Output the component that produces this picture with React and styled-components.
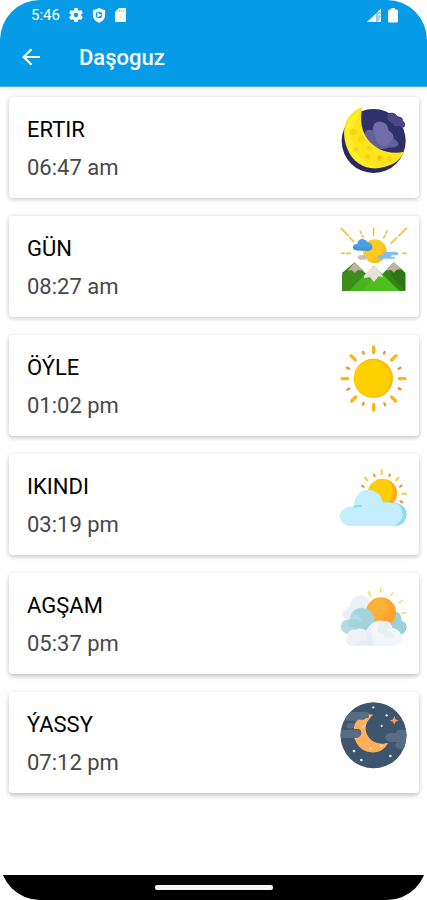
import React from 'react';
import styled, { createGlobalStyle } from 'styled-components';

const GlobalStyle = createGlobalStyle`
  *, *::before, *::after { box-sizing: border-box; }
  body { margin: 0; background: #fff; font-family: Roboto, "Noto Sans", sans-serif; }
`;

const Shell = styled.div`
  display: flex;
  flex-direction: column;
  min-height: 100vh;
  border-radius: 40px;
  overflow: hidden;
  background: #fefefe;
`;

const Header = styled.header`
  background: #059be7;
  color: #fff;
  border-bottom: 1px solid #4aaee6;
`;

const StatusBar = styled.div`
  display: flex;
  align-items: center;
  justify-content: space-between;
  height: 30px;
  padding: 0 29px 0 31px;
`;

const StatusGroup = styled.div`
  display: flex;
  align-items: center;
  gap: ${({ $gap }) => $gap}px;
`;

const Clock = styled.time`
  font-size: 15px;
  line-height: 20px;
`;

const Toolbar = styled.div`
  display: flex;
  align-items: center;
  gap: 34px;
  height: 56px;
  padding: 0 18px;
`;

const BackButton = styled.button`
  display: flex;
  padding: 0;
  border: 0;
  background: none;
  color: inherit;
  cursor: pointer;
`;

const Title = styled.h1`
  margin: 0;
  font-size: 22px;
  line-height: 28px;
  font-weight: 500;
`;

const CardList = styled.main`
  flex: 1;
  display: flex;
  flex-direction: column;
  gap: 18px;
  padding: 10px 8px 24px 9px;
`;

const Card = styled.article`
  display: flex;
  justify-content: space-between;
  align-items: flex-start;
  padding: 10px 12px 8px 18px;
  border-radius: 4px;
  background: #fff;
  box-shadow: 0 ${({ $depth }) => $depth}px 4px rgba(0, 0, 0, 0.15), 0 1px 5px rgba(0, 0, 0, 0.1);
`;

const CardText = styled.div`
  display: flex;
  flex-direction: column;
  gap: 12px;
  padding: 10px 0 9px;
`;

const PrayerName = styled.h2`
  margin: 0;
  font-size: 22px;
  line-height: 26px;
  font-weight: 400;
  color: #000;
`;

const PrayerTime = styled.time`
  font-size: 22px;
  line-height: 26px;
  color: #484848;
`;

const Picture = styled.svg`
  display: block;
  width: 67px;
  height: 67px;
  flex: none;
`;

const NavBar = styled.footer`
  display: flex;
  justify-content: center;
  align-items: center;
  height: 25px;
  background: #000;
`;

const HomePill = styled.div`
  width: 118px;
  height: 5px;
  border-radius: 2px;
  background: #f4f4f4;
`;

const GearIcon = () => (
  <svg width="14" height="14" viewBox="2 2 20 20" fill="#fff" aria-hidden="true">
    <path fillRule="evenodd" d="M19.4 13a7.500 7.500 0 0 0 0-2l2.100-1.600a.5.5 0 0 0 .1-.6l-2-3.500a.5.5 0 0 0-.6-.2l-2.500 1a7.300 7.300 0 0 0-1.700-1L14.500 2.400a.5.5 0 0 0-.5-.4h-4a.5.5 0 0 0-.5.4L9.200 5.100a7.300 7.300 0 0 0-1.700 1L5 5.100a.5.5 0 0 0-.6.2l-2 3.500a.5.5 0 0 0 .1.600L4.600 11a7.500 7.500 0 0 0 0 2l-2.100 1.600a.5.5 0 0 0-.1.600l2 3.500c.1.200.4.300.6.200l2.500-1a7.300 7.300 0 0 0 1.700 1l.3 2.700c0 .2.200.4.500.4h4c.3 0 .5-.2.5-.4l.3-2.700a7.300 7.300 0 0 0 1.700-1l2.500 1c.2.100.5 0 .6-.2l2-3.500a.5.5 0 0 0-.1-.6zM12 15.200a3.200 3.200 0 1 1 0-6.400 3.200 3.200 0 0 1 0 6.400z" />
  </svg>
);

const ShieldIcon = () => (
  <svg width="14" height="15" viewBox="0 0 14 16" aria-hidden="true">
    <path d="M7 0 13.500 2.500V7.500c0 4-2.700 7-6.500 8.300C3.200 14.500.5 11.500.5 7.500v-5z" fill="#fff" />
    <circle cx="7" cy="7.500" r="3.500" fill="#059be7" />
    <path d="m5.200 4.800 4.800 2.700-4.800 2.700z" fill="#fff" />
  </svg>
);

const SdCardIcon = () => (
  <svg width="11" height="14" viewBox="0 0 11 14" aria-hidden="true">
    <path d="M4 0h6q1 0 1 1v12q0 1-1 1H1q-1 0-1-1V4z" fill="#fff" />
    <path d="M4.500 2v2M6.500 2v2M8.500 2v2" stroke="#8fd0f4" strokeWidth="1" />
  </svg>
);

const SignalIcon = () => (
  <svg width="15" height="14" viewBox="0 0 15 14" aria-hidden="true">
    <path d="M0 14 9.500 5v9z" fill="#fff" />
    <path d="M9.500 5 14 .5V14H9.500z" fill="#8fcff3" />
    <path d="m10 4.500 4-4V4h-3zM11 6h3v1.500h-3zM12.300 9H14v5h-3v-1.500h1.300z" fill="#e8f6fd" />
  </svg>
);

const BatteryIcon = () => (
  <svg width="10" height="15" viewBox="0 0 10 15" aria-hidden="true">
    <path d="M3 0h4v1.500h1.500q1.500 0 1.500 2V13q0 1.500-1.500 1.500h-7Q0 14.500 0 13V3.500q0-2 1.500-2H3z" fill="#fff" />
  </svg>
);

const ArrowIcon = () => (
  <svg width="27" height="24" viewBox="0 0 27 24" fill="none" stroke="#fff" strokeWidth="2.200" aria-hidden="true">
    <path d="M22 11H6M13.500 3.200 5.700 11l7.800 7.800" />
  </svg>
);

const CrescentPicture = () => (
  <Picture viewBox="30 36 201 201" aria-hidden="true">
    <circle cx="131" cy="138" r="96" fill="#2a2860" />
    <path d="M92 50Q130 35 172 57L180 54Q194 50 202 64Q218 65 219 78Q228 84 224 95L215 99Q227 134 220 171Q175 179 136 159Q85 128 92 50" fill="#30306a" />
    <path d="M124 158Q107 149 100 134Q98 118 110 106Q122 102 130 106Q128 83 150 80Q174 83 175 106Q192 115 190 130Q204 137 205 148Q198 160 181 157Q158 166 139 159z" fill="#646099" />
    <path d="M128 101Q132 78 152 80Q175 84 175 107Q192 117 190 130L168 153Q151 157 141 140z" fill="#716dab" />
    <path d="M171 59Q186 49 201 62L205 67Q222 67 217 80Q230 87 222 97L203 93Q190 97 189 85Q171 80 171 59" fill="#4c4885" />
    <path d="M97 36C43 55 32 108 51 159C70 210 118 230 162 216C199 207 216 187 222 170C176 181 138 161 119 140C95 115 88 76 97 36z" fill="#fbe51b" />
    <path d="M92 47C52 64 36 111 54 159C69 200 105 219 141 219C102 206 64 170 65 119C66 94 76 70 92 47z" fill="#ffef2b" />
    <g fill="#f8d418">
      <circle cx="69" cy="111" r="10" /><circle cx="94" cy="132" r="10" /><circle cx="77" cy="163" r="7" />
      <circle cx="118" cy="159" r="7" /><circle cx="150" cy="190" r="10" /><circle cx="112" cy="185" r="8" /><circle cx="179" cy="191" r="9" />
    </g>
    <circle cx="149" cy="189" r="5" fill="#efbd15" />
  </Picture>
);

const SunrisePicture = () => (
  <Picture viewBox="30 33 201 201" aria-hidden="true">
    <g stroke="#f6c137" strokeWidth="5" strokeLinecap="round" fill="none">
      <path d="M33 40l22 22M60 68l10 11M91 49l3 6M96 61l4 7M131 40v21M171 49l-3 6M165 61l-4 7M229 40l-22 22M201 68l-18 17" />
      <path d="M35 115h8M49 115h12M218 115h10" />
    </g>
    <circle cx="134" cy="108" r="35" fill="#ffc91f" />
    <path d="M158 83a35 35 0 0 1-47 52a40 40 0 0 0 47-52z" fill="#f9bd1c" />
    <path d="M78 106Q67 103 69 94Q72 86 82 87Q83 74 96 72Q110 74 112 82Q126 84 127 95Q127 107 114 107z" fill="#4a9fe6" />
    <path d="M78 106Q67 103 69 94Q80 99 110 98Q121 98 127 94Q127 107 114 107z" fill="#4194dd" />
    <path d="M91 121h12q9 2 9 7t-9 6H92q-7 0-8-6t7-7z" fill="#c7bdb4" />
    <path d="M162 110h37q6 1 6 6t-8 5h-13v5h7q5 2 4 5h-47q-6-1-6-6t7-4h13v-5q-5-1-5-3t5-3z" fill="#7fc0f0" />
    <path d="M37 173 74 142 112 181 90 228H37z" fill="#318014" />
    <path d="M36 181 75 143 106 179 56 228H36z" fill="#3d8d1a" />
    <path d="M155 179 191 142 226 174V228H180z" fill="#35851a" />
    <path d="M191 143 226 174V228L180 179z" fill="#2c7512" />
    <path d="M57 228 132 153 209 228z" fill="#4fbf20" />
    <path d="M57 228 132 153 132 190 96 228z" fill="#48b31e" />
    <path d="m74 141 23 25-13-1-10 9-9-9-11 2zM191 141l22 22-13 1-8 9-9-8-14 1z" fill="#bfb0a5" />
    <path d="m121 161 5-6h13l21 32-14-3-14 17-13-15-16 4-2-7z" fill="#e8e0da" />
  </Picture>
);

const NoonPicture = () => (
  <Picture viewBox="30 30 201 201" aria-hidden="true">
    <circle cx="130" cy="130" r="59" fill="#ffb900" />
    <circle cx="127" cy="130" r="55" fill="#ffd000" />
    <g strokeLinecap="round" fill="none">
      <path d="M131 36v17M131 208v17M36 131h17M208 131h17M63 62l13 13M185 75l13-13M65 198l12-12M185 186l12 12" stroke="#ffb514" strokeWidth="10" />
      <path d="M99 51l2 5M164 51l-2 5M51 98l6 3M206 101l5-3M52 164l6-3M206 160l6 3M99 209l2-5M163 205l2 5" stroke="#f3902c" strokeWidth="7" />
    </g>
  </Picture>
);

const AfternoonPicture = () => (
  <Picture viewBox="30 27 201 201" aria-hidden="true">
    <circle cx="157" cy="115" r="44" fill="#ffcd00" />
    <path d="M174 74a44 44 0 0 1-5 83h-18c42-17 48-55 23-83z" fill="#ffae14" />
    <g strokeLinecap="round" fill="none">
      <path d="M155 45v12M105 68l7 8M199 75l7-7M217 116h11" stroke="#f8c83b" strokeWidth="6" />
      <path d="M132 59l2 5M180 58l-2 5M96 92l5 3M210 95l5-3M211 139l6 3" stroke="#ed8f39" strokeWidth="6" />
    </g>
    <path d="M71 156q4-48 45-52 34 3 44 38 15-2 24 1 10-2 22 3 24 8 24 33-2 31-34 34H60q-28-5-29-31 4-23 29-26z" fill="#8ddbed" />
    <path d="M71 154q5-48 46-50 33 3 42 39 15-3 25 1 38 1 40 34-3 30-34 35H60q-28-5-29-31 4-23 29-26z" fill="#c4edff" />
    <path d="M71 156q15-6 25-2" stroke="#8edced" strokeWidth="5" fill="none" />
    <path d="M204 146q25 9 25 33-4 31-37 34 28-13 25-39-2-17-13-28z" fill="#8ddbed" />
  </Picture>
);

const EveningPicture = () => (
  <Picture viewBox="30 24 201 201" aria-hidden="true">
    <g stroke="#ffd34f" strokeWidth="4" strokeLinecap="round" fill="none">
      <path d="M115 50l7 14M152 41v10M188 54l-5 8M206 84l11-7M216 114h11" />
    </g>
    <path d="M36 125q-2-15 15-22 4-9 10-9 0-26 25-33 22 0 32 15l-6 46-51 14z" fill="#ebf0f6" />
    <path d="M176 127q14-19 27-15 13 8 12 26 15 4 15 17-2 24-25 24l-31-14z" fill="#9bd2d8" />
    <circle cx="153" cy="112" r="45" fill="#ffad30" />
    <path d="M173 72a45 45 0 0 1 18 63l-26 17c-49 0-55-22-55-30 47 27 82-10 63-50z" fill="#ffa233" />
    <circle cx="145" cy="97" r="24" fill="#ffb844" opacity=".5" />
    <path d="M32 155q1-21 27-22 3-30 30-34 35-4 45 32l-6 31-30 16H58q-24-3-26-23z" fill="#b0dce2" />
    <path d="M59 134q20-6 36 8-3-20-25-25 8-15 24-17 34 0 40 31l-6 31-30 16q-3-22-39-22-12-9 0-22z" fill="#9dcfd7" opacity=".6" />
    <path d="M53 181q2-20 25-17 13-8 31 2 18-32 47-29 27-1 31 22 28 5 28 34-3 17-21 20H62q-13-4-14-15 0-11 5-17z" fill="#eef2f6" />
    <path d="M119 167q13-31 38-29 29-1 30 22 28 3 28 34-3 16-21 18H131q15-19-11-34z" fill="#f3f6f9" />
    <path d="M156 138q25 1 30 23-10-1-17 5 22 4 24 24-13-8-26 0-7-18-24-18-4-13 13-34M108 169q13-2 18 10-1 17 8 31h-21q-23-4-40 2 8-16 35-14 8-15 0-29z" fill="#e1e8ef" opacity=".5" />
  </Picture>
);

const NightPicture = () => (
  <Picture viewBox="30 38 201 201" aria-hidden="true">
    <clipPath id="night-sky"><circle cx="130.500" cy="138" r="99" /></clipPath>
    <circle cx="130.500" cy="138" r="99" fill="#3d566e" />
    <path clipPath="url(#night-sky)" d="M62 68H111q11 4 8 16-3 8-15 8H88v25H52q-7-9 5-15h18V94H49q-6-7 1-14zM30 121h57q10 4 7 15-4 10-17 10H30zM210 121h24v58h-24q-14-3-14-11 0-7 6-10h-22q-14-3-14-14t14-13h20q-3-9 10-10z" fill="#586d84" />
    <path d="M130 76 116 75v10q-10 0-15 6H84q-13 13-12 28h15q10 6 6 17-3 8-16 10h-4c8 24 23 40 49 43 26 2 45-11 52-29l-14 3c-30 2-52-20-53-43-1-17 9-32 23-44z" fill="#ffaf5a" />
    <path d="M101 103h6v6h-6zM149 164h8v8h-8z" fill="#f6c38a" />
    <path d="m193 80 4 10 9 4-9 3-4 9-4-9-9-3 9-4z" fill="#f39963" />
    <g fill="#d7edf7">
      <circle cx="130" cy="54" r="3.500" /><circle cx="170" cy="78" r="3.500" /><circle cx="155" cy="110" r="3.500" />
      <circle cx="100" cy="112" r="3" /><circle cx="72" cy="185" r="4" /><circle cx="94" cy="212" r="4" />
      <circle cx="181" cy="200" r="4" /><circle cx="122" cy="177" r="3" /><circle cx="154" cy="169" r="3" />
    </g>
  </Picture>
);

const prayers = [
  { name: 'ERTIR', time: '06:47 am', iso: '06:47', depth: 1, Art: CrescentPicture },
  { name: 'GÜN', time: '08:27 am', iso: '08:27', depth: 1, Art: SunrisePicture },
  { name: 'ÖÝLE', time: '01:02 pm', iso: '13:02', depth: 2, Art: NoonPicture },
  { name: 'IKINDI', time: '03:19 pm', iso: '15:19', depth: 2, Art: AfternoonPicture },
  { name: 'AGŞAM', time: '05:37 pm', iso: '17:37', depth: 3, Art: EveningPicture },
  { name: 'ÝASSY', time: '07:12 pm', iso: '19:12', depth: 3, Art: NightPicture },
];

export default function App() {
  return (
    <>
      <GlobalStyle />
      <Shell>
        <Header>
          <StatusBar>
            <StatusGroup $gap={9}>
              <Clock dateTime="05:46">5:46</Clock>
              <GearIcon />
              <ShieldIcon />
              <SdCardIcon />
            </StatusGroup>
            <StatusGroup $gap={6}>
              <SignalIcon />
              <BatteryIcon />
            </StatusGroup>
          </StatusBar>
          <Toolbar>
            <BackButton type="button" aria-label="Back"><ArrowIcon /></BackButton>
            <Title>Daşoguz</Title>
          </Toolbar>
        </Header>
        <CardList>
          {prayers.map(({ name, time, iso, depth, Art }) => (
            <Card key={name} $depth={depth}>
              <CardText>
                <PrayerName>{name}</PrayerName>
                <PrayerTime dateTime={iso}>{time}</PrayerTime>
              </CardText>
              <Art />
            </Card>
          ))}
        </CardList>
        <NavBar><HomePill /></NavBar>
      </Shell>
    </>
  );
}
